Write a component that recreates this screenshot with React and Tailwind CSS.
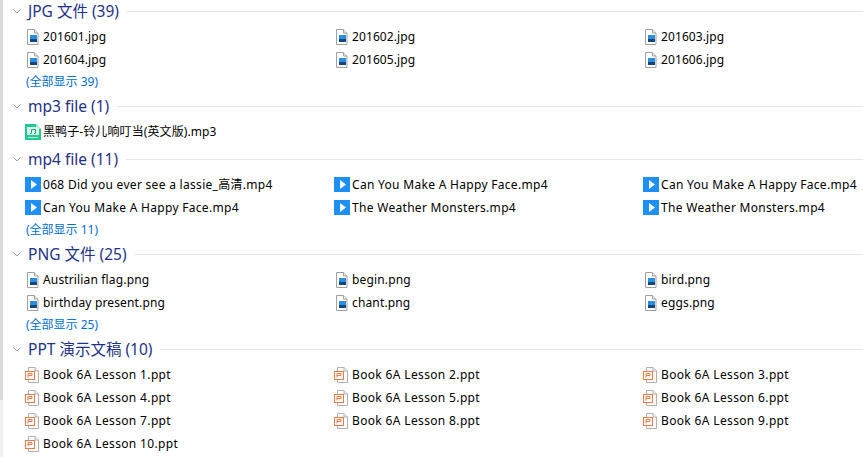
import React from 'react';

const sections = [
  { title: 'JPG 文件 (39)', type: 'image', more: 39, gap: 'mb-1', text: 'tracking-[0.100px]', files: ['201601.jpg', '201602.jpg', '201603.jpg', '201604.jpg', '201605.jpg', '201606.jpg'] },
  { title: 'mp3 file (1)', type: 'audio', gap: 'mb-[5px]', text: 'tracking-[0.100px]', files: ['黑鸭子-铃儿响叮当(英文版).mp3'] },
  { title: 'mp4 file (11)', type: 'video', more: 11, gap: 'mb-1', text: 'tracking-[0.300px]', files: ['068 Did you ever see a lassie_高清.mp4', 'Can You Make A Happy Face.mp4', 'Can You Make A Happy Face.mp4', 'Can You Make A Happy Face.mp4', 'The Weather Monsters.mp4', 'The Weather Monsters.mp4'] },
  { title: 'PNG 文件 (25)', type: 'image', more: 25, gap: 'mb-1', text: 'tracking-[0.150px]', files: ['Austrilian flag.png', 'begin.png', 'bird.png', 'birthday present.png', 'chant.png', 'eggs.png'] },
  { title: 'PPT 演示文稿 (10)', type: 'ppt', gap: 'mb-1', text: 'tracking-[0.350px]', files: ['Book 6A Lesson 1.ppt', 'Book 6A Lesson 2.ppt', 'Book 6A Lesson 3.ppt', 'Book 6A Lesson 4.ppt', 'Book 6A Lesson 5.ppt', 'Book 6A Lesson 6.ppt', 'Book 6A Lesson 7.ppt', 'Book 6A Lesson 8.ppt', 'Book 6A Lesson 9.ppt', 'Book 6A Lesson 10.ppt'] },
];

const ImageIcon = () => (
  <svg width="16" height="16" viewBox="0 0 16 16" className="shrink-0">
    <path d="M2.500 0.500h7l3.500 3.500v11.500h-10.500z" fill="#fff" stroke="#a0a0a0" />
    <path d="M9.500 0.500v3.500h3.500" fill="#f0f0f0" stroke="#a0a0a0" />
    <rect x="5" y="6" width="7" height="7" fill="#2b8fe0" />
    <rect x="5" y="10" width="7" height="3" fill="#14457f" />
  </svg>
);

const AudioIcon = () => (
  <svg width="16" height="16" viewBox="0 0 16 16" className="shrink-0">
    <path d="M0 0h11l5 5v11h-16z" fill="#1fc98f" />
    <path d="M11 0l5 5h-5z" fill="#a5ecd3" />
    <rect x="2" y="3" width="12" height="8" fill="#d9f7ec" />
    <path d="M6.500 9V5.500h4V9" fill="none" stroke="#14a873" />
    <path d="M5 9.500h1.500M9 9.500h1.500" stroke="#14a873" />
    <path d="M3 13.500h10" stroke="#b6f0dc" />
  </svg>
);

const VideoIcon = () => (
  <svg width="16" height="16" viewBox="0 0 16 16" className="shrink-0">
    <rect width="16" height="15" fill="#1e90f5" />
    <path d="M6 3l6 4.500-6 4.500z" fill="#fff" />
  </svg>
);

const PptIcon = () => (
  <svg width="16" height="16" viewBox="0 0 16 16" className="shrink-0">
    <path d="M3.500 0.500h6.500l3.500 3.500v11.500h-10z" fill="#fff" stroke="#b0b0b0" />
    <path d="M10 0.500v3.500h3.500" fill="#f0f0f0" stroke="#b0b0b0" />
    <rect x="0.500" y="4.500" width="9" height="8" fill="#fff" stroke="#ec7a45" />
    <path d="M3 10.500v-4h4v2h-4" fill="none" stroke="#ec7a45" />
  </svg>
);

const icons = { image: ImageIcon, audio: AudioIcon, video: VideoIcon, ppt: PptIcon };

const App = () => {
  return (
    <div className="relative h-[457px] w-[863px] overflow-hidden bg-white pl-[3px] text-black font-['Noto_Sans','Noto_Sans_CJK_SC',sans-serif]">
      {/* Scrollbar strip */}
      <div className="absolute left-0 top-0 h-full w-[3px] bg-[#f2f2f2]">
        <div className="h-[400px] bg-[#d9d9d9]"></div>
      </div>

      {sections.map((section) => {
        const Icon = icons[section.type];
        return (
          <section key={section.title} className={section.gap}>
            {/* Group header */}
            <div className="flex h-[22px] items-center mb-[3px]">
              <svg width="8" height="5" viewBox="0 0 8 5" className="ml-[10px] shrink-0">
                <path d="M0.500 0.500L4 4l3.500-3.500" fill="none" stroke="#a0a0a0" />
              </svg>
              <h2 className="ml-[7px] pt-[2px] text-[15.500px] font-normal text-[#1e3287] whitespace-nowrap">{section.title}</h2>
              <div className="ml-2 h-px flex-1 bg-[#e5e5e5]"></div>
            </div>

            <div className="grid grid-cols-[309px_309px_1fr] pl-[22px]">
              {section.files.map((file, index) => (
                <div key={index} className={`flex h-[23px] items-center gap-[2px] whitespace-nowrap text-xs ${section.text}`}>
                  <Icon />
                  <span className="pt-px">{file}</span>
                </div>
              ))}
            </div>

            {section.more && (
              <div className="flex h-5 items-center pl-[23px] pt-[2px] text-xs text-[#0070d0]">(全部显示 {section.more})</div>
            )}
          </section>
        );
      })}
    </div>
  );
};

export default App;
